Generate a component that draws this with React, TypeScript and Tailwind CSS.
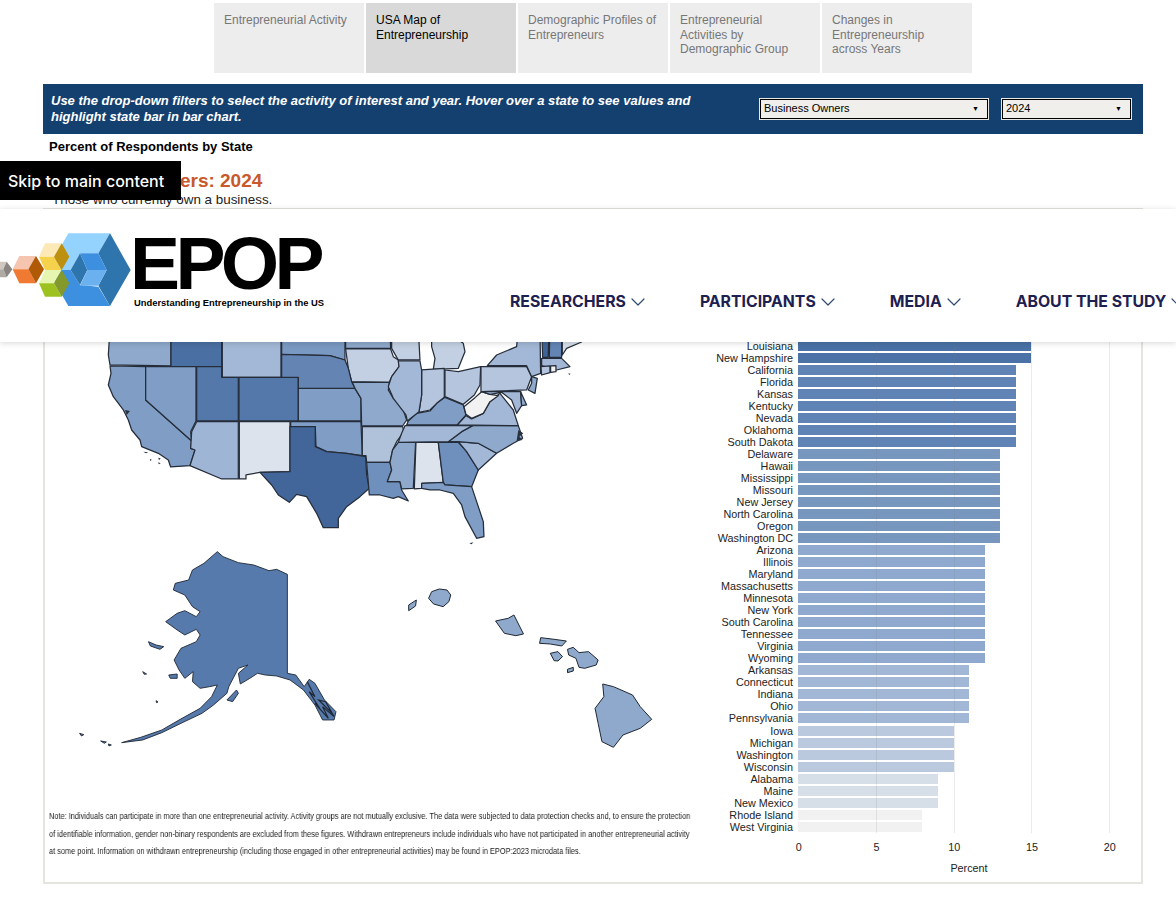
import { ChevronDown } from 'lucide-react'

const TABS = [
  { label: ['Entrepreneurial Activity'], active: false },
  { label: ['USA Map of', 'Entrepreneurship'], active: true },
  { label: ['Demographic Profiles of', 'Entrepreneurs'], active: false },
  { label: ['Entrepreneurial', 'Activities by', 'Demographic Group'], active: false },
  { label: ['Changes in', 'Entrepreneurship', 'across Years'], active: false },
]

const NAV = ['RESEARCHERS', 'PARTICIPANTS', 'MEDIA', 'ABOUT THE STUDY']

const NOTE = [
  'Note: Individuals can participate in more than one entrepreneurial activity. Activity groups are not mutually exclusive. The data were subjected to data protection checks and, to ensure the protection',
  'of identifiable information, gender non-binary respondents are excluded from these figures. Withdrawn entrepreneurs include individuals who have not participated in another entrepreneurial activity',
  'at some point. Information on withdrawn entrepreneurship (including those engaged in other entrepreneurial activities) may be found in EPOP:2023 microdata files.',
]

const BAR_COLORS: Record<number, string> = {
  15: '#4a72a6',
  14: '#6083b5',
  13: '#7897bf',
  12: '#8ea9cd',
  11: '#a2b7d5',
  10: '#bac9de',
  9: '#d6dee8',
  8: '#f1f1f1',
}

const BARS: Array<[string, number]> = [
  ['Louisiana', 15], ['New Hampshire', 15],
  ['California', 14], ['Florida', 14], ['Kansas', 14], ['Kentucky', 14], ['Nevada', 14], ['Oklahoma', 14], ['South Dakota', 14],
  ['Delaware', 13], ['Hawaii', 13], ['Mississippi', 13], ['Missouri', 13], ['New Jersey', 13], ['North Carolina', 13], ['Oregon', 13], ['Washington DC', 13],
  ['Arizona', 12], ['Illinois', 12], ['Maryland', 12], ['Massachusetts', 12], ['Minnesota', 12], ['New York', 12], ['South Carolina', 12], ['Tennessee', 12], ['Virginia', 12], ['Wyoming', 12],
  ['Arkansas', 11], ['Connecticut', 11], ['Indiana', 11], ['Ohio', 11], ['Pennsylvania', 11],
  ['Iowa', 10], ['Michigan', 10], ['Washington', 10], ['Wisconsin', 10],
  ['Alabama', 9], ['Maine', 9], ['New Mexico', 9],
  ['Rhode Island', 8], ['West Virginia', 8],
]

const UNIT = 15.55

// traced from the reference, lower 48 (3x units)
const STATES: Array<[string, string]> = [
  ['#8ea9cb', '30,-20 213,-20 213,93 30,90 25,60'],
  ['#4a6fa3', '213,-20 365,-20 365,95 213,95'],
  ['#a3b8d6', '367,-20 543,-20 543,127 367,127'],
  ['#7a99c2', '545,-20 735,-20 735,75 690,62 545,58'],
  ['#8ea9cb', '737,-20 870,-20 872,40 737,40'],
  ['#c3d0e3', '737,42 872,42 880,65 895,75 898,95 875,125 868,142 755,140 745,100'],
  ['#c3d0e3', '875,-20 955,-20 960,75 895,75 875,40'],
  ['#c3d0e3', '995,-20 1070,12 1090,25 1095,50 1075,100 1000,103 1005,70 995,35'],
  ['#7f9dc5', '30,93 137,95 137,195 275,318 272,340 285,345 270,392 212,396 205,375 175,355 125,335 120,315 95,285 85,255 70,225 40,185 25,150 33,115'],
  ['#7f9dc5', '137,95 288,95 288,258 272,290 275,318 137,195'],
  ['#5478a9', '290,95 365,95 365,127 415,127 415,258 290,258'],
  ['#5478a9', '417,127 595,127 595,258 417,258'],
  ['#9fb5d5', '290,260 415,260 415,432 365,432 270,392 285,345 272,340 275,290'],
  ['#dde3ec', '418,260 570,260 570,410 480,412 438,420 438,432 418,432'],
  ['#7f9dc5', '572,260 783,260 787,362 740,355 680,350 648,335 646,275 572,275'],
  ['#426699', '570,275 646,275 646,335 680,350 740,355 797,365 800,420 808,460 780,485 740,515 715,550 715,578 670,578 650,535 620,485 590,478 568,502 535,480 515,450 480,412 570,410'],
  ['#7f9dc5', '595,160 765,160 783,190 783,258 595,258'],
  ['#6485b3', '545,58 690,62 735,75 745,100 755,140 765,160 595,160 595,127 545,127'],
  ['#8ea9cb', '757,142 868,142 865,165 880,190 905,210 920,255 908,273 785,273 783,190 765,160'],
  ['#b0c1da', '787,275 908,275 912,290 890,320 878,345 870,382 800,382 798,362 787,362'],
  ['#6f90bd', '800,382 870,382 875,405 862,440 900,440 905,465 925,498 895,485 880,490 840,480 808,480'],
  ['#8ea9cb', '895,322 947,322 940,460 905,462 900,440 862,440 875,405 870,382 878,345'],
  ['#dde3ec', '948,322 1015,322 1030,442 965,445 965,460 943,462'],
  ['#6f90bd', '1015,322 1075,322 1100,350 1135,405 1115,455 1035,450 1030,442'],
  ['#7f9dc5', '965,445 1030,442 1035,450 1115,455 1130,500 1150,560 1152,605 1130,610 1095,545 1085,510 1060,475 1020,465 990,465 965,460'],
  ['#a3b8d6', '1075,320 1135,325 1190,355 1135,405 1100,350'],
  ['#8ea9cb', '1045,320 1085,290 1118,272 1255,272 1268,310 1240,325 1190,355 1135,325 1075,320'],
  ['#a3b8d6', '915,272 1118,272 1085,290 1045,320 895,322 905,295'],
  ['#7f9dc5', '920,270 925,258 950,235 990,228 1010,205 1035,187 1090,210 1098,240 1072,270'],
  ['#a3b8d6', '1072,270 1098,242 1115,252 1150,235 1170,200 1200,175 1240,225 1255,272'],
  ['#f2f2f2', '1092,215 1125,188 1145,170 1170,178 1195,182 1170,200 1150,235 1115,250 1098,238'],
  ['#b5c5dd', '1035,105 1075,110 1142,95 1140,150 1123,180 1090,208 1035,185'],
  ['#b5c5dd', '965,105 1033,100 1033,187 1010,205 990,225 957,232 965,180'],
  ['#a3b8d6', '895,78 960,78 965,105 965,180 957,230 922,258 918,240 880,190 865,155 875,125 897,95'],
  ['#b5c5dd', '1143,95 1280,95 1295,125 1280,165 1143,170'],
  ['#a3b8d6', '1162,92 1190,60 1250,35 1255,-20 1320,-20 1322,115 1295,125 1280,92'],
  ['#8ea9cb', '1295,125 1312,130 1305,175 1285,165 1295,145'],
  ['#a3b8d6', '1145,170 1262,170 1265,212 1250,235 1235,195 1205,172 1170,178'],
  ['#8ea9cb', '1262,170 1280,210 1265,212'],
  ['#3f6496', '1325,-20 1347,-20 1345,67 1328,67'],
  ['#6485b3', '1350,-20 1385,-20 1385,67 1348,67'],
  ['#d6dee8', '1387,-20 1445,-20 1445,21 1400,40 1387,60'],
  ['#a3b8d6', '1325,70 1385,70 1410,95 1370,105 1325,92'],
  ['#b5c5dd', '1323,95 1350,93 1350,113 1325,120'],
  ['#f2f2f2', '1352,93 1368,92 1368,110 1352,112'],
]

// coast bits too small to read as shapes
const SPECKS = ['130,350 145,352 138,355', '150,372 156,375 150,377', '175,368 182,370 177,376', '175,382 182,385 176,388', '1108,625 1120,622 1115,628', '1405,115 1412,116 1408,120', '75,225 90,228 80,240', '1255,285 1270,295 1258,305 1268,315 1250,318']

// alaska and hawaii, x at 2.613 and y at 3 per pixel
const ALASKA = [
  '385,35 400,50 440,68 480,75 520,92 540,88 568,103 568,400 590,405 612,440 625,418 640,430 665,480 695,515 690,540 660,540 640,495 610,450 575,420 540,408 510,405 490,400 470,415 445,432 440,400 465,375 440,385 415,440 410,460 375,495 345,520 290,550 240,578 190,600 135,608 185,592 240,570 285,540 340,505 370,470 385,435 365,440 340,445 320,425 322,395 300,415 285,390 272,360 290,325 330,305 340,285 330,268 300,285 280,270 250,245 280,220 300,212 330,230 340,215 320,200 300,165 270,150 275,130 310,120 320,90 350,70',
  '410,480 435,450 440,460 425,485',
  '205,305 225,315 245,320 235,328 210,318',
  '258,405 280,402 280,415 262,415',
  '25,580 36,584 30,588',
  '80,603 95,606 90,610',
  '190,395 200,402 194,403',
  '225,482 230,486 226,488',
  '100,612 108,615 102,618',
]

const HAWAII = [
  '1392,432 1420,440 1470,465 1490,500 1520,538 1490,565 1445,585 1420,622 1390,605 1380,550 1372,505 1395,470',
  '1300,328 1315,322 1330,338 1355,335 1380,360 1375,375 1345,385 1330,382 1322,355 1303,345',
  '1230,293 1265,298 1297,303 1285,318 1255,312 1227,310',
  '1255,340 1275,335 1287,350 1275,363 1265,362',
  '1300,388 1315,382 1315,393 1300,398',
  '1112,243 1145,235 1160,225 1185,282 1165,287 1135,280',
  '945,155 965,147 985,150 995,165 990,185 975,200 950,192 937,175',
  '885,195 905,180 903,198 885,212',
]

function UsaMap() {
  return (
    <svg viewBox="45 210 650 598" className="h-[598px] w-[650px] block">
      <g transform="translate(100 335) scale(0.3333)">
        {STATES.map(([fill, points]) => (
          <polygon key={points} points={points} fill={fill} stroke="#252d3a" strokeWidth={1.25} strokeLinejoin="round" vectorEffect="non-scaling-stroke" />
        ))}
        {SPECKS.map((points) => (
          <polygon key={points} points={points} fill="#2a3240" />
        ))}
      </g>
      <g transform="translate(70 540) scale(0.3827 0.3333)">
        {ALASKA.map((points) => (
          <polygon key={points} points={points} fill="#567aab" stroke="#1f2733" strokeWidth={0.9} strokeLinejoin="round" vectorEffect="non-scaling-stroke" />
        ))}
        <polyline points="620,425 640,470 625,455 655,510 640,490 675,535 660,500 690,530 668,485 650,480 685,520" fill="none" stroke="#1f2733" strokeWidth={1.2} vectorEffect="non-scaling-stroke" />
        {HAWAII.map((points) => (
          <polygon key={points} points={points} fill="#8ea9cb" stroke="#1f2733" strokeWidth={1} strokeLinejoin="round" vectorEffect="non-scaling-stroke" />
        ))}
      </g>
    </svg>
  )
}

function BarChart() {
  return (
    <div className="pt-[130px] w-[446px] text-[10.8px] text-[#222]">
      <div className="relative">
        {BARS.map(([name, value]) => (
          <div key={name} className="flex h-[12.025px] items-center">
            <div className="w-[98px] shrink-0 text-right leading-[12px] whitespace-nowrap">{name}</div>
            <div className="ml-[5px] h-[10px]" style={{ width: value * UNIT, backgroundColor: BAR_COLORS[value] }} />
          </div>
        ))}
        {[5, 10, 15, 20].map((tick) => (
          <div key={tick} className="absolute top-0 bottom-0 w-px bg-[#777]/15" style={{ left: 103 + tick * UNIT }} />
        ))}
      </div>
      <div className="flex ml-[65px] mt-[7px] leading-[14px]">
        {[0, 5, 10, 15, 20].map((tick) => (
          <div key={tick} className="w-[77.75px] shrink-0 text-center">{tick}</div>
        ))}
      </div>
      <div className="ml-[224px] w-[100px] mt-[7px] text-center leading-[14px]">Percent</div>
    </div>
  )
}

function Select({ value, width }: { value: string; width: string }) {
  return (
    <div className={`${width} h-[22px] border border-[#e8e8e4]`}>
      <div className="flex h-full items-center justify-between border border-black bg-[#f0efeb] pl-[3px] pr-[8px] pb-[1px] text-[11px] text-black">
        <span>{value}</span>
        <span className="text-[7px] leading-none">▼</span>
      </div>
    </div>
  )
}

function Logo() {
  return (
    <svg viewBox="0 0 399 300" className="h-[100px] w-[133px] shrink-0">
      <polygon points="205,40 330,40 295,100 240,100 212,150 143,150" fill="#93d3fd" />
      <polygon points="143,150 212,150 240,195 295,200 330,258 205,258" fill="#3d8fe0" />
      <polygon points="330,40 392,150 330,258 295,197 320,150 295,100" fill="#2e75ad" />
      <polygon points="240,100 262,150 240,195 212,150" fill="#2e75ad" />
      <polygon points="240,100 295,100 320,150 262,150" fill="#3d8fe0" />
      <polygon points="262,150 320,150 295,197 240,197" fill="#6cb1ef" />

      <polygon points="135,70 185,70 162,110 117,110" fill="#fde9b8" />
      <polygon points="117,110 162,110 185,150 135,150" fill="#f6d24c" />
      <polygon points="185,70 208,110 185,150 162,110" fill="#bd9010" />

      <polygon points="135,150 185,150 162,190 117,190" fill="#e6f5b0" />
      <polygon points="117,190 162,190 185,230 135,230" fill="#9dc21f" />
      <polygon points="185,150 208,190 185,230 162,190" fill="#84992c" />

      <polygon points="58,108 108,108 85,148 38,148" fill="#f5c5b0" />
      <polygon points="38,148 85,148 108,190 58,190" fill="#f07a32" />
      <polygon points="108,108 132,148 108,190 85,148" fill="#b05a05" />

      <polygon points="-5,125 20,125 10,148 -10,148" fill="#d0c8c0" />
      <polygon points="-10,148 10,148 20,172 -5,172" fill="#b0aaa5" />
      <polygon points="20,125 37,148 20,172 10,148" fill="#8a8580" />
    </svg>
  )
}

function SiteHeader() {
  return (
    <header className="absolute top-[209px] left-0 w-[1176px] h-[133px] overflow-hidden bg-white shadow-[0_1px_6px_rgba(0,0,0,0.16)] flex items-start">
      <div className="mt-[11px]">
        <Logo />
      </div>
      <div className="w-[192px] shrink-0 mt-[21px] -ml-[3px] text-black font-bold">
        <div className="text-[75px] leading-[66px] tracking-[-4.6px]">EPOP</div>
        <div className="text-[9.4px] leading-[12px] mt-[1px] ml-[4px] whitespace-nowrap">Understanding Entrepreneurship in the US</div>
      </div>
      <nav className="flex ml-[188px] mt-[81px] shrink-0 text-[#1e2150] font-['Inter',sans-serif] font-bold text-[15.8px] leading-[20px]">
        {NAV.map((item) => (
          <div key={item} className="flex items-center mr-[50px] whitespace-nowrap">
            {item}
            <ChevronDown size={24} strokeWidth={1.2} className="text-[#2f4a72]" />
          </div>
        ))}
      </nav>
    </header>
  )
}

export default function App() {
  return (
    <div className="relative h-[900px] w-[1176px] overflow-hidden bg-white font-['Liberation_Sans',Arial,sans-serif]">
      <div className="flex gap-[2px] ml-[214px] pt-[3px]">
        {TABS.map((tab) => (
          <div
            key={tab.label[0]}
            className={`w-[150px] h-[70px] px-[10px] pt-[10px] text-[12px] leading-[14.7px] ${tab.active ? 'bg-[#d9d9d9] text-black' : 'bg-[#ededed] text-[#777]'}`}
          >
            {tab.label.map((line) => (
              <div key={line}>{line}</div>
            ))}
          </div>
        ))}
      </div>

      <div className="ml-[43px] mt-[11px] w-[1100px] h-[50px] bg-[#144070] flex items-center">
        <p className="w-[650px] ml-[8px] text-[13px] leading-[16px] font-bold italic text-white">
          Use the drop-down filters to select the activity of interest and year. Hover over a state to see values and highlight state bar in bar chart.
        </p>
        <div className="flex gap-[12px] ml-[58px]">
          <Select value="Business Owners" width="w-[230px]" />
          <Select value="2024" width="w-[131px]" />
        </div>
      </div>

      <div className="ml-[49px] mt-[5px] text-[13px] leading-[16px] font-bold text-black">Percent of Respondents by State</div>
      <div className="ml-[49px] mt-[15px] text-[19px] leading-[22px] font-bold text-[#c8592a]">Business Owners: 2024</div>
      <div className="ml-[52px] text-[13.4px] leading-[16px] text-[#222]">Those who currently own a business.</div>

      <section className="ml-[43px] w-[1100px] h-[676px] border-2 border-[#e5e5e0] flex">
        <div className="w-[650px] shrink-0">
          <UsaMap />
          <div className="ml-[4px] text-[9px] leading-[17.5px] text-[#222]">
            {NOTE.map((line) => (
              <div key={line} className="whitespace-nowrap origin-left scale-x-[0.82] will-change-transform">{line}</div>
            ))}
          </div>
        </div>
        <BarChart />
      </section>

      <SiteHeader />

      <a href="#main" className="absolute left-0 top-[161px] w-[181px] h-[39px] bg-black text-white flex items-center pl-[8px] font-['Inter',sans-serif] font-medium text-[16px]">
        Skip to main content
      </a>
    </div>
  )
}
